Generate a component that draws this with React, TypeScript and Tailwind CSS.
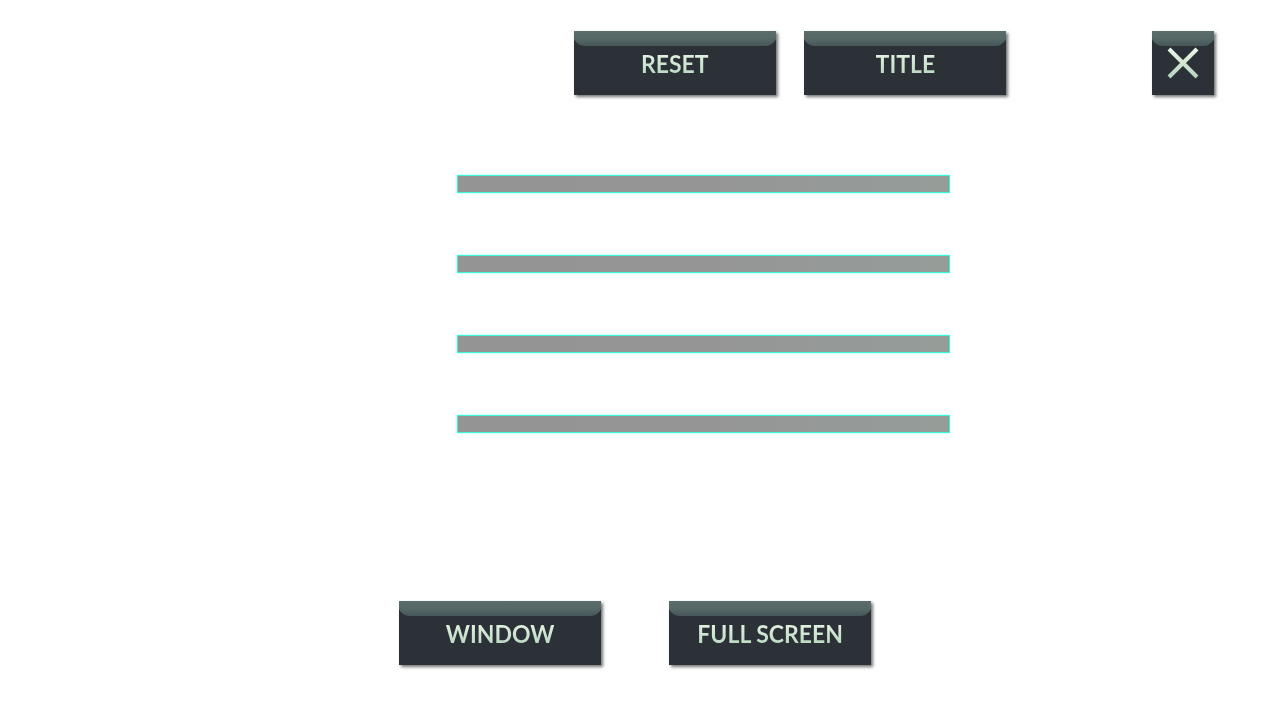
import React from "react";

// Options screen — four volume bars and window-mode buttons

function Gloss() {
  return (
    <span className="absolute left-[-1px] right-[-1px] top-0 h-[15px] rounded-b-[12px] bg-gradient-to-b from-[#5b6c6a] via-[#566866] to-[#46565a] blur-[0.6px]" />
  );
}

function GameButton({ label }: { label: string }) {
  return (
    <button className="relative h-[64px] w-[202px] bg-[#2c3138] overflow-hidden shadow-[2px_2px_3px_rgba(0,0,0,0.55)] flex items-center justify-center">
      <Gloss />
      <span className="relative mt-[1px] scale-x-[0.92] text-[25px] font-bold leading-none bg-gradient-to-b from-[#e8f5e4] to-[#b7d7c0] bg-clip-text text-transparent [font-family:Lato,'Noto_Sans',sans-serif]">
        {label}
      </span>
    </button>
  );
}

function CloseButton() {
  return (
    <button className="relative h-[64px] w-[62px] bg-[#2c3138] overflow-hidden shadow-[2px_2px_3px_rgba(0,0,0,0.55)] flex items-center justify-center">
      <Gloss />
      <svg className="relative" width="34" height="34" viewBox="0 0 34 34">
        <defs>
          <linearGradient id="xg" x1="0" y1="0" x2="0" y2="1">
            <stop offset="0" stopColor="#eaf6e6" />
            <stop offset="1" stopColor="#b7d6bf" />
          </linearGradient>
        </defs>
        <path d="M3 3 L31 31 M31 3 L3 31" stroke="url(#xg)" strokeWidth="4" />
      </svg>
    </button>
  );
}

function Bar() {
  return (
    <div className="h-[18px] w-[493px] border border-[#3ff5d2] shadow-[0_0_2px_#7dffe6] bg-gradient-to-r from-[#949494] via-[#959595] to-[#959d99]" />
  );
}

export default function App() {
  return (
    <div className="w-[1280px] h-[720px] bg-white flex flex-col">
      <div className="flex pt-[31px] pl-[574px]">
        <GameButton label="RESET" />
        <div className="ml-[28px]">
          <GameButton label="TITLE" />
        </div>
        <div className="ml-[146px]">
          <CloseButton />
        </div>
      </div>

      <div className="flex flex-col gap-[62px] pl-[457px] mt-[80px]">
        <Bar />
        <Bar />
        <Bar />
        <Bar />
      </div>

      <div className="flex gap-[68px] pl-[399px] mt-[168px]">
        <GameButton label="WINDOW" />
        <GameButton label="FULL SCREEN" />
      </div>
    </div>
  );
}
